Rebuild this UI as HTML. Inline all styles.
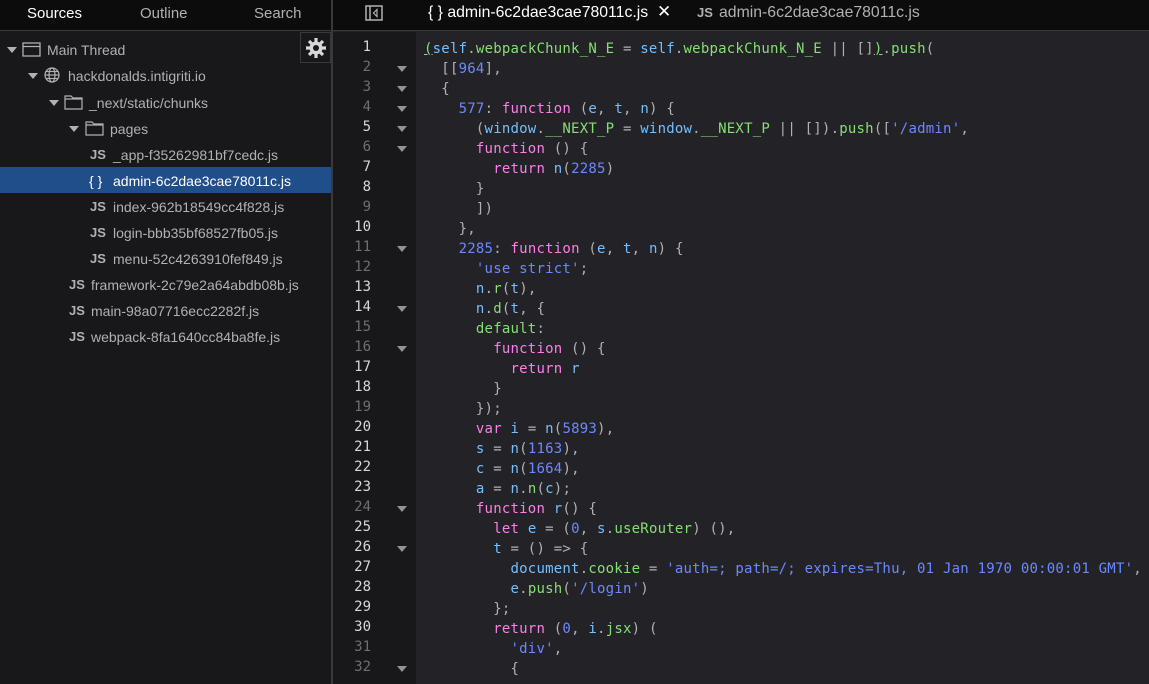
<!DOCTYPE html>
<html><head><meta charset="utf-8"><style>
*{margin:0;padding:0;box-sizing:border-box}
body{width:1149px;height:684px;overflow:hidden;background:#232327;font-family:"Liberation Sans",sans-serif;position:relative}
#side{position:absolute;left:0;top:0;width:331px;height:684px;background:#18181a}
#tabs{position:absolute;left:0;top:0;width:331px;height:31px;background:#0c0c0d;border-bottom:1px solid #38383d;color:#b1b1b3;font-size:15px}
#tabs span{position:absolute;top:5px}
#vsep{position:absolute;left:331px;top:0;width:2px;height:684px;background:#38383d}
#etabs{position:absolute;left:333px;top:0;right:0;height:31px;background:#0c0c0d;border-bottom:1px solid #38383d;font-size:15px;color:#b1b1b3}
.row{position:absolute;left:0;width:331px;height:26px;font-size:14px;color:#b1b1b3;line-height:28px;white-space:nowrap}
.row .t{position:absolute}
.sel{background:#204e8a;color:#fff}
.js{font-weight:bold;font-size:13px;color:#b1b1b3;position:absolute}
.arr{position:absolute;width:0;height:0;border-left:5px solid transparent;border-right:5px solid transparent;border-top:6px solid #b1b1b3;top:11px}
#gear{position:absolute;left:300px;top:32px;width:31px;height:31px;border:1px solid #38383d;background:#18181a}
#gut{position:absolute;left:333px;top:32px;width:83px;height:652px;background:#18181a}
.ln{position:absolute;left:333px;width:38px;text-align:right;font-family:"DejaVu Sans Mono",monospace;font-size:14px;color:#6e6e73}
.ln.b{color:#d7d7db}
.fa{position:absolute;left:397px;width:0;height:0;border-left:5px solid transparent;border-right:5px solid transparent;border-top:6px solid #939395}
#code{position:absolute;left:424px;top:39px;font-family:"DejaVu Sans Mono",monospace;font-size:14px;letter-spacing:0.22px;line-height:20px;color:#b1b1b3;white-space:pre}
.k{color:#ff7de9}.n{color:#6b89ff}.s{color:#6b89ff}.i{color:#75bfff}.p{color:#86de74}
</style></head><body>
<div id="side"></div>
<div id="tabs"><span style="left:27px;color:#fff">Sources</span><span style="left:140px">Outline</span><span style="left:254px">Search</span></div>
<div id="vsep"></div>
<div id="etabs">
<svg style="position:absolute;left:32px;top:5px" width="18" height="16" viewBox="0 0 18 16"><rect x="1" y="1" width="16" height="14" fill="none" stroke="#b1b1b3" stroke-width="1.5"/><line x1="5" y1="1" x2="5" y2="15" stroke="#b1b1b3" stroke-width="1.5"/><path d="M12 4.5 L8.5 8 L12 11.5 Z" fill="none" stroke="#b1b1b3" stroke-width="1.2"/></svg>
<span style="position:absolute;left:95px;top:4px;color:#fff;font-size:15.8px">{ } admin-6c2dae3cae78011c.js</span>
<span style="position:absolute;left:324px;top:2px;color:#fff;font-size:17px">✕</span>
<span style="position:absolute;left:364px;top:5px;font-weight:bold;font-size:13px">JS</span>
<span style="position:absolute;left:386px;top:4px;font-size:15.8px">admin-6c2dae3cae78011c.js</span>
</div>
<div id="gear"><svg width="29" height="29" viewBox="0 0 29 29"><g transform="translate(15 15)" stroke="#d7d7db" stroke-width="3.2" stroke-linecap="butt"><line x1="0" y1="-10" x2="0" y2="10"/><line x1="-10" y1="0" x2="10" y2="0"/><line x1="-7" y1="-7" x2="7" y2="7"/><line x1="-7" y1="7" x2="7" y2="-7"/></g><circle cx="15" cy="15" r="6.5" fill="#d7d7db"/><circle cx="15" cy="15" r="3" fill="#18181a"/></svg></div>

<div class="row" style="top:36px"><div class="arr" style="left:7px"></div><svg style="position:absolute;left:22px;top:6px" width="19" height="15"><rect x="1" y="1" width="17" height="13" fill="none" stroke="#b1b1b3" stroke-width="1.3"/><line x1="1" y1="4.5" x2="18" y2="4.5" stroke="#b1b1b3" stroke-width="1.3"/></svg><span class="t" style="left:47px">Main Thread</span></div>
<div class="row" style="top:62px"><div class="arr" style="left:28px"></div><svg style="position:absolute;left:44px;top:5px" width="16" height="16" viewBox="0 0 16 16" fill="none" stroke="#b1b1b3" stroke-width="1.2"><circle cx="8" cy="8" r="7"/><ellipse cx="8" cy="8" rx="3" ry="7"/><line x1="1" y1="8" x2="15" y2="8"/><line x1="2" y1="4.5" x2="14" y2="4.5"/><line x1="2" y1="11.5" x2="14" y2="11.5"/></svg><span class="t" style="left:68px">hackdonalds.intigriti.io</span></div>
<div class="row" style="top:89px"><div class="arr" style="left:49px"></div><svg style="position:absolute;left:64px;top:5px" width="19" height="16"><path d="M1 2 H7 L9 4 H18 V15 H1 Z M1 5 H18" fill="none" stroke="#b1b1b3" stroke-width="1.2"/></svg><span class="t" style="left:89px">_next/static/chunks</span></div>
<div class="row" style="top:115px"><div class="arr" style="left:69px"></div><svg style="position:absolute;left:85px;top:5px" width="19" height="16"><path d="M1 2 H7 L9 4 H18 V15 H1 Z M1 5 H18" fill="none" stroke="#b1b1b3" stroke-width="1.2"/></svg><span class="t" style="left:110px">pages</span></div>
<div class="row" style="top:141px"><span class="js" style="left:90px">JS</span><span class="t" style="left:113px">_app-f35262981bf7cedc.js</span></div>
<div class="row sel" style="top:167px"><span class="t" style="left:89px">{ }</span><span class="t" style="left:113px">admin-6c2dae3cae78011c.js</span></div>
<div class="row" style="top:193px"><span class="js" style="left:90px">JS</span><span class="t" style="left:113px">index-962b18549cc4f828.js</span></div>
<div class="row" style="top:219px"><span class="js" style="left:90px">JS</span><span class="t" style="left:113px">login-bbb35bf68527fb05.js</span></div>
<div class="row" style="top:245px"><span class="js" style="left:90px">JS</span><span class="t" style="left:113px">menu-52c4263910fef849.js</span></div>
<div class="row" style="top:271px"><span class="js" style="left:69px">JS</span><span class="t" style="left:91px">framework-2c79e2a64abdb08b.js</span></div>
<div class="row" style="top:297px"><span class="js" style="left:69px">JS</span><span class="t" style="left:91px">main-98a07716ecc2282f.js</span></div>
<div class="row" style="top:323px"><span class="js" style="left:69px">JS</span><span class="t" style="left:91px">webpack-8fa1640cc84ba8fe.js</span></div>

<div id="gut"></div>
<div id="lns"></div>
<div id="code"><span style="color:#86de74;text-decoration:underline">(</span><span class="i">self</span>.<span class="p">webpackChunk_N_E</span> = <span class="i">self</span>.<span class="p">webpackChunk_N_E</span> || []<span style="color:#86de74;text-decoration:underline">)</span>.<span class="p">push</span>(
  [[<span class="n">964</span>],
  {
    <span class="n">577</span>: <span class="k">function</span> (<span class="i">e</span>, <span class="i">t</span>, <span class="i">n</span>) {
      (<span class="i">window</span>.<span class="p">__NEXT_P</span> = <span class="i">window</span>.<span class="p">__NEXT_P</span> || []).<span class="p">push</span>([<span class="s">'/admin'</span>,
      <span class="k">function</span> () {
        <span class="k">return</span> <span class="i">n</span>(<span class="n">2285</span>)
      }
      ])
    },
    <span class="n">2285</span>: <span class="k">function</span> (<span class="i">e</span>, <span class="i">t</span>, <span class="i">n</span>) {
      <span class="s">'use strict'</span>;
      <span class="i">n</span>.<span class="p">r</span>(<span class="i">t</span>),
      <span class="i">n</span>.<span class="p">d</span>(<span class="i">t</span>, {
      <span class="p">default</span>:
        <span class="k">function</span> () {
          <span class="k">return</span> <span class="i">r</span>
        }
      });
      <span class="k">var</span> <span class="i">i</span> = <span class="i">n</span>(<span class="n">5893</span>),
      <span class="i">s</span> = <span class="i">n</span>(<span class="n">1163</span>),
      <span class="i">c</span> = <span class="i">n</span>(<span class="n">1664</span>),
      <span class="i">a</span> = <span class="i">n</span>.<span class="p">n</span>(<span class="i">c</span>);
      <span class="k">function</span> <span class="i">r</span>() {
        <span class="k">let</span> <span class="i">e</span> = (<span class="n">0</span>, <span class="i">s</span>.<span class="p">useRouter</span>) (),
        <span class="i">t</span> = () =&gt; {
          <span class="i">document</span>.<span class="p">cookie</span> = <span class="s">'auth=; path=/; expires=Thu, 01 Jan 1970 00:00:01 GMT'</span>,
          <span class="i">e</span>.<span class="p">push</span>(<span class="s">'/login'</span>)
        };
        <span class="k">return</span> (<span class="n">0</span>, <span class="i">i</span>.<span class="p">jsx</span>) (
          <span class="s">'div'</span>,
          {</div>
<script>
var bright=[1,5,7,8,10,13,14,17,18,20,21,22,23,25,26,27,28,29,30];
var folds=[2,3,4,5,6,11,14,16,24,26,32];
var h='';
for(var i=1;i<=32;i++){var y=39+(i-1)*20;
h+='<div class="ln'+(bright.indexOf(i)>=0?' b':'')+'" style="top:'+(y)+'px">'+i+'</div>';
if(folds.indexOf(i)>=0)h+='<div class="fa" style="top:'+(y+7)+'px"></div>';}
document.getElementById('lns').innerHTML=h;
</script>
</body></html>
